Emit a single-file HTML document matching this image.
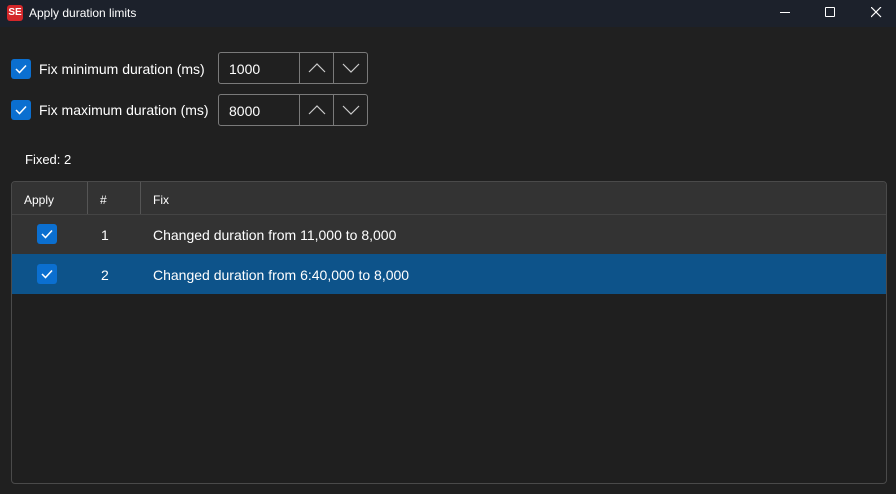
<!DOCTYPE html>
<html><head><style>
body{margin:0;width:896px;height:494px;background:#202020;font-family:"Liberation Sans",sans-serif;color:#fff;position:relative;overflow:hidden;font-size:13px}
.t{position:absolute;white-space:nowrap}
.cb{position:absolute;width:20px;height:20px;background:#0b6fd0;border-radius:3px}
.cb svg{position:absolute;left:4px;top:5px}
.inp{position:absolute;left:218px;width:148px;height:30px;border:1px solid #7a7a7a;border-radius:3px}
.inp .v{position:absolute;left:10px;top:8px;font-size:14px}
.inp .s{position:absolute;top:0;bottom:0;border-left:1px solid #7a7a7a}
.inp svg{position:absolute;top:10px}
</style></head><body>
<div style="position:absolute;left:0;top:0;width:896px;height:27px;background:#1c212b"></div>
<div style="position:absolute;left:7px;top:5px;width:16px;height:16px;background:#d4272a;border-radius:3px;font-size:10px;font-weight:bold;line-height:16px;text-align:center">SE</div>
<div class="t" style="left:29px;top:6px;font-size:12px">Apply duration limits</div>
<div style="position:absolute;left:780px;top:12px;width:10px;height:1px;background:#fff"></div>
<div style="position:absolute;left:825px;top:7px;width:8px;height:8px;border:1px solid #fff;border-radius:1px"></div>
<svg style="position:absolute;left:871px;top:7px" width="11" height="11"><path d="M0 0L10 10M10 0L0 10" stroke="#fff" stroke-width="1.2"/></svg>

<div class="cb" style="left:11px;top:59px"><svg width="12" height="10"><path d="M1 5L4.5 8.5L11 1.5" stroke="#fff" stroke-width="1.5" fill="none"/></svg></div>
<div class="t" style="left:39px;top:61px;font-size:14px">Fix minimum duration (ms)</div>
<div class="inp" style="top:52px"><div class="v">1000</div><div class="s" style="left:80px"></div><div class="s" style="left:114px"></div>
<svg style="left:89px" width="18" height="10"><path d="M1 9L9 1L17 9" stroke="#ccc" stroke-width="1.2" fill="none"/></svg>
<svg style="left:123px" width="18" height="10"><path d="M1 1L9 9L17 1" stroke="#ccc" stroke-width="1.2" fill="none"/></svg></div>

<div class="cb" style="left:11px;top:100px"><svg width="12" height="10"><path d="M1 5L4.5 8.5L11 1.5" stroke="#fff" stroke-width="1.5" fill="none"/></svg></div>
<div class="t" style="left:39px;top:102px;font-size:14px">Fix maximum duration (ms)</div>
<div class="inp" style="top:94px"><div class="v">8000</div><div class="s" style="left:80px"></div><div class="s" style="left:114px"></div>
<svg style="left:89px" width="18" height="10"><path d="M1 9L9 1L17 9" stroke="#ccc" stroke-width="1.2" fill="none"/></svg>
<svg style="left:123px" width="18" height="10"><path d="M1 1L9 9L17 1" stroke="#ccc" stroke-width="1.2" fill="none"/></svg></div>

<div class="t" style="left:25px;top:152px">Fixed: 2</div>

<div style="position:absolute;left:11px;top:181px;width:874px;height:301px;border:1px solid #4a4a4a;border-radius:4px;background:#1f1f1f;overflow:hidden">
<div style="position:absolute;left:0;top:0;width:100%;height:32px;background:#333;border-bottom:1px solid #444"></div>
<div style="position:absolute;left:75px;top:0;height:32px;border-left:1px solid #555"></div>
<div style="position:absolute;left:128px;top:0;height:32px;border-left:1px solid #555"></div>
<div class="t" style="left:12px;top:11px;font-size:12px">Apply</div>
<div class="t" style="left:88px;top:11px;font-size:12px">#</div>
<div class="t" style="left:141px;top:11px;font-size:12px">Fix</div>
<div style="position:absolute;left:0;top:33px;width:100%;height:39px;background:#333"></div>
<div style="position:absolute;left:0;top:72px;width:100%;height:40px;background:#0d538a"></div>
<div class="cb" style="left:25px;top:42px"><svg width="12" height="10"><path d="M1 5L4.5 8.5L11 1.5" stroke="#fff" stroke-width="1.5" fill="none"/></svg></div>
<div class="cb" style="left:25px;top:82px"><svg width="12" height="10"><path d="M1 5L4.5 8.5L11 1.5" stroke="#fff" stroke-width="1.5" fill="none"/></svg></div>
<div class="t" style="left:89px;top:45px;font-size:14px">1</div>
<div class="t" style="left:89px;top:85px;font-size:14px">2</div>
<div class="t" style="left:141px;top:45px;font-size:14px">Changed duration from 11,000 to 8,000</div>
<div class="t" style="left:141px;top:85px;font-size:14px">Changed duration from 6:40,000 to 8,000</div>
</div>
</body></html>
